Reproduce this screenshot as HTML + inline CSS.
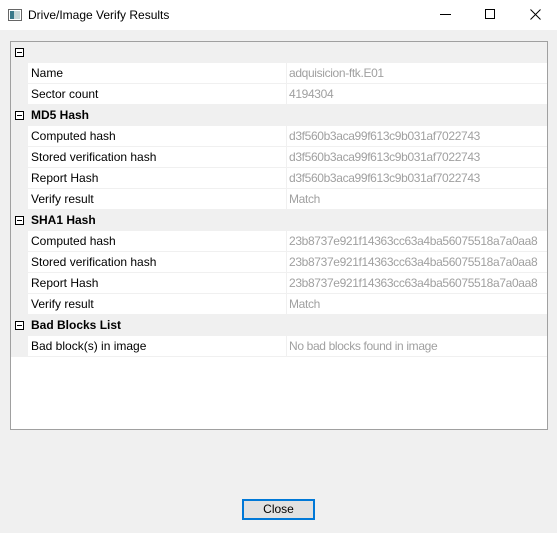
<!DOCTYPE html>
<html><head><style>
*{margin:0;padding:0;box-sizing:border-box}
body{width:557px;height:533px;background:#f0f0f0;font-family:"Liberation Sans",sans-serif;font-size:12px;position:relative;overflow:hidden;color:#000}
.title{position:absolute;left:0;top:0;width:557px;height:30px;background:#fff}
.grid{position:absolute;left:10px;top:41px;width:538px;height:389px;border:1px solid #a0a0a0;background:#fff}
.row{position:absolute;left:0;width:536px;height:21px}
.cat{background:#f0f0f0;font-weight:bold}
.cat span{position:absolute;left:20px;top:3px}
.data .g{position:absolute;left:0;top:0;width:17px;height:21px;background:#f0f0f0}
.data .n{position:absolute;left:17px;top:0;width:259px;height:21px;border-bottom:1px solid #f0f0f0;border-right:1px solid #f0f0f0;padding:3px 0 0 3px}
.data .v{position:absolute;left:276px;top:0;width:260px;height:21px;border-bottom:1px solid #f0f0f0;padding:3px 0 0 2px;color:#a0a0a0;letter-spacing:-0.35px;white-space:nowrap;overflow:hidden}
.box{position:absolute;left:4px;top:6px;width:9px;height:9px;border:1px solid #000;background:#fff}
.box:after{content:"";position:absolute;left:1px;top:3px;width:5px;height:1px;background:#000}
</style></head><body>
<div class="title">
<svg style="position:absolute;left:8px;top:9px" width="14" height="12"><rect x="0.5" y="0.5" width="13" height="11" fill="#fff" stroke="#666"/><rect x="2" y="2" width="4" height="8" fill="#3a7a8a"/><rect x="6" y="2" width="6" height="8" fill="#c8d8d8"/></svg>
<div style="position:absolute;left:28px;top:8px;font-size:12px">Drive/Image Verify Results</div>
<div style="position:absolute;left:440px;top:14px;width:11px;height:1px;background:#000"></div>
<div style="position:absolute;left:485px;top:9px;width:10px;height:10px;border:1px solid #000"></div>
<svg style="position:absolute;left:530px;top:9px" width="11" height="11"><path d="M0.5 0.5L10.5 10.5M10.5 0.5L0.5 10.5" stroke="#000" stroke-width="1"/></svg>
</div>
<div class="grid">
<div class="row cat" style="top:0"><div class="box"></div></div>
<div class="row data" style="top:21px"><div class="g"></div><div class="n">Name</div><div class="v">adquisicion-ftk.E01</div></div>
<div class="row data" style="top:42px"><div class="g"></div><div class="n">Sector count</div><div class="v">4194304</div></div>
<div class="row cat" style="top:63px"><div class="box"></div><span>MD5 Hash</span></div>
<div class="row data" style="top:84px"><div class="g"></div><div class="n">Computed hash</div><div class="v">d3f560b3aca99f613c9b031af7022743</div></div>
<div class="row data" style="top:105px"><div class="g"></div><div class="n">Stored verification hash</div><div class="v">d3f560b3aca99f613c9b031af7022743</div></div>
<div class="row data" style="top:126px"><div class="g"></div><div class="n">Report Hash</div><div class="v">d3f560b3aca99f613c9b031af7022743</div></div>
<div class="row data" style="top:147px"><div class="g"></div><div class="n">Verify result</div><div class="v">Match</div></div>
<div class="row cat" style="top:168px"><div class="box"></div><span>SHA1 Hash</span></div>
<div class="row data" style="top:189px"><div class="g"></div><div class="n">Computed hash</div><div class="v">23b8737e921f14363cc63a4ba56075518a7a0aa8</div></div>
<div class="row data" style="top:210px"><div class="g"></div><div class="n">Stored verification hash</div><div class="v">23b8737e921f14363cc63a4ba56075518a7a0aa8</div></div>
<div class="row data" style="top:231px"><div class="g"></div><div class="n">Report Hash</div><div class="v">23b8737e921f14363cc63a4ba56075518a7a0aa8</div></div>
<div class="row data" style="top:252px"><div class="g"></div><div class="n">Verify result</div><div class="v">Match</div></div>
<div class="row cat" style="top:273px"><div class="box"></div><span>Bad Blocks List</span></div>
<div class="row data" style="top:294px"><div class="g"></div><div class="n">Bad block(s) in image</div><div class="v">No bad blocks found in image</div></div>
</div>
<div style="position:absolute;left:242px;top:499px;width:73px;height:21px;border:2px solid #0078d7;background:#e1e1e1;text-align:center;line-height:17px">Close</div>
</body></html>
